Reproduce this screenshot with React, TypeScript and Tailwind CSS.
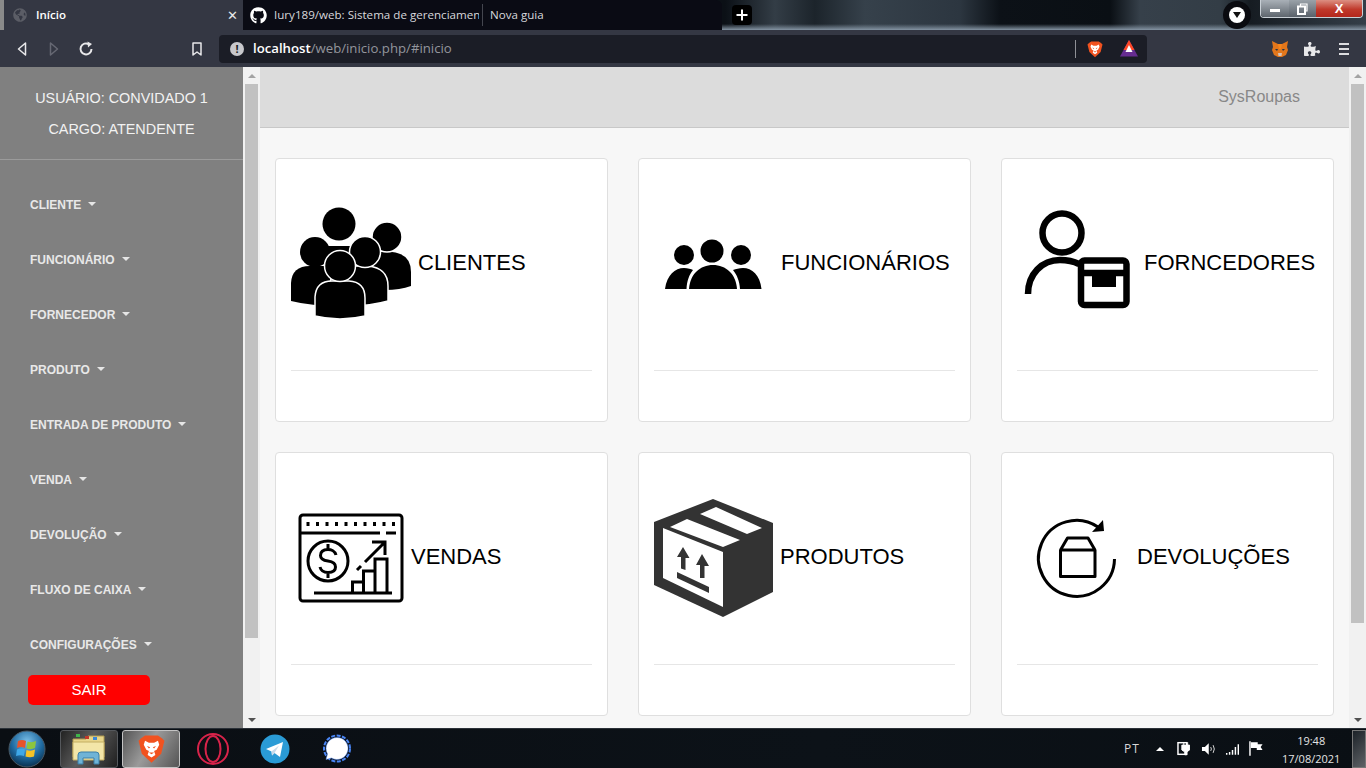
import React from "react";
import { FaGithub, FaGlobeAmericas, FaPuzzlePiece } from "react-icons/fa";

const arial = "font-['Liberation_Sans',Arial,sans-serif]";
const ui = "font-['Open_Sans',sans-serif]";

function Caret() {
  return <span className="ml-[7px] mt-[-1px] h-0 w-0 border-x-[4px] border-t-[4px] border-x-transparent border-t-[#e6e6e6]" />;
}

const menu = ["CLIENTE", "FUNCIONÁRIO", "FORNECEDOR", "PRODUTO", "ENTRADA DE PRODUTO", "VENDA", "DEVOLUÇÃO", "FLUXO DE CAIXA", "CONFIGURAÇÕES"];

function Scrollbar({ end }: { end: number }) {
  return (
    <div className="flex h-full w-[17px] shrink-0 flex-col items-center bg-[#f1f1f1]">
      <div className="flex h-[17px] w-full shrink-0 items-center justify-center">
        <span className="h-0 w-0 border-x-[4px] border-b-[4px] border-x-transparent border-b-[#a3a3a3]" />
      </div>
      <div className="w-[13px] bg-[#c1c1c1]" style={{ height: end }} />
      <div className="flex-1" />
      <div className="flex h-[17px] w-full shrink-0 items-center justify-center">
        <span className="h-0 w-0 border-x-[4px] border-t-[4px] border-x-transparent border-t-[#505050]" />
      </div>
    </div>
  );
}

function Card({ icon, label }: { icon: React.ReactNode; label: string }) {
  return (
    <div className="h-[264px] rounded-[4px] border border-[#dfdfdf] bg-white px-[15px] pt-[15px]">
      <div className={`flex h-[176px] items-center text-[22px] text-black ${arial}`}>
        {icon}
        <span className="whitespace-nowrap">{label}</span>
      </div>
      <div className="mt-[20px] h-px bg-[#e6e6e6]" />
    </div>
  );
}

const IconClients = (
  <svg width="127" height="176" viewBox="291 174 127 176" className="shrink-0">
    <g fill="#000" stroke="#fff" strokeWidth="1.5">
      <circle cx="339" cy="224" r="16.5" stroke="none" />
      <path d="M325 246 H353 V275 H325Z" stroke="none" />
      <path d="M379 252 H392 Q411 254 411 272 V286 Q400 290 385 290 L370 262 Z" stroke="none" />
      <circle cx="387" cy="237" r="15" stroke="#fff" />
      <path d="M291 301 V283 Q292 266 310 266 H326 Q345 268 348 283 V306 Q315 307 291 301Z" stroke="none" />
      <path d="M330 304 V283 Q333 266 350 266 H368 Q388 268 388 286 V301 Q370 306 350 306Z" />
      <circle cx="315" cy="252" r="15" stroke="none" />
      <circle cx="365" cy="252" r="15.5" />
      <path d="M315 316 V297 Q316 281 332 281 H349 Q365 282 365 298 V316 Q340 322 315 316Z" />
      <circle cx="340" cy="266" r="15.5" />
    </g>
  </svg>
);

const IconStaff = (
  <svg width="127" height="176" viewBox="654 174 127 176" className="shrink-0">
    <circle cx="712" cy="251" r="11.5" fill="#000" />
    <circle cx="684" cy="255" r="10" fill="#000" />
    <circle cx="741" cy="255" r="10" fill="#000" />
    <path d="M689 289 C690 274 700 265 713 265 C726 265 736 274 737 289Z" fill="#000" />
    <path d="M665 289 C667 275 675 268 684 268 C688 268 691 269 693 270 C689 275 687 281 686.500 289Z" fill="#000" />
    <path d="M761.500 289 C760 275 752 268 743 268 C739 268 736 269 733 270 C737 275 739.500 281 740 289Z" fill="#000" />
  </svg>
);

const IconSupplier = (
  <svg width="127" height="176" viewBox="1017 174 127 176" className="shrink-0">
    <g fill="none" stroke="#000" strokeWidth="6.500">
      <circle cx="1062" cy="233" r="19.500" />
      <path d="M1028 294 C1028 274 1042 260 1060 260 C1067 260 1073 261 1079 264" />
      <rect x="1081" y="260.500" width="45.500" height="44.500" rx="3.500" />
      <path d="M1080 273 H1127" />
    </g>
    <rect x="1092" y="273" width="24" height="14" fill="#000" />
  </svg>
);

const IconSales = (
  <svg width="120" height="176" viewBox="291 468 120 176" className="shrink-0">
    <g fill="none" stroke="#000" strokeWidth="3">
      <rect x="300" y="515" width="102" height="86" rx="3" />
      <path d="M300 533 H380 M386 533 H396" />
      <path d="M308 522 V526 M317.500 522 V526 M327 522 V526 M336.500 522 V526 M346 522 V526 M355.500 522 V526 M365 522 V526 M374.500 522 V526 M384 522 V526 M393.500 522 V526" />
      <circle cx="328" cy="561" r="20" />
      <path d="M336 555 C335 551 331 549.500 328 549.500 C323 549.500 320.500 552 320.500 555.500 C320.500 559.500 324 560.500 328 561 C332 561.500 335.500 563 335.500 567 C335.500 570.500 333 572.500 328 572.500 C324 572.500 321 571 320 567 M328 544 V549 M328 573 V578" />
      <path d="M357 570 L361 566 M365 562 L385 542 M372 542 H385 V555" />
      <path d="M314 593 H392 M352.500 593 V582 H363.500 V593 M363.500 582 V571 H375 V593 M375 571 V559 H387 V593" />
    </g>
  </svg>
);

const IconBox = (
  <svg width="126" height="176" viewBox="654 468 126 176" className="shrink-0">
    <path d="M713 499 L773 523 V592 L723 617 L654 585 V522Z" fill="#333" />
    <path d="M663 528 L723 552 V607 L663 578Z" fill="#fff" />
    <path d="M670 527 L687 519 L740 540 L723 547Z M700 514 L716 507 L762 528 L747 534Z" fill="#fff" />
    <path d="M683 547 L689.500 558 H685.500 V570 L681 568.500 V557 H677Z M702 554 L709 566 H704.500 V578 H700 V565 H696Z" fill="#333" />
    <path d="M677 572 L709 587 V593 L677 578Z" fill="#333" />
  </svg>
);

const IconReturn = (
  <svg width="120" height="176" viewBox="1017 468 120 176" className="shrink-0">
    <g fill="none" stroke="#000" strokeWidth="3">
      <path d="M1098 527 A38 38 0 1 0 1114.500 559" />
      <path d="M1060.500 550 H1095 V576.500 H1060.500Z M1060.500 550 L1067.500 538 H1088 L1095 550" strokeLinejoin="round" />
    </g>
    <path d="M1103 520 L1104 531 L1092 532Z" fill="#000" />
  </svg>
);

function BraveLogo({ size, className = "" }: { size: number; className?: string }) {
  return (
    <svg width={size} height={size} viewBox="0 0 24 24" className={className}>
      <path d="M4 4 L7 2 H17 L20 4 L22 6 L19.500 16 L12 23 L4.500 16 L2 6Z" fill="#f1521f" />
      <path d="M7 6 L10 7.500 H14 L17 6 L18 9 L16 13 L14 14 L15 17 L12 19 L9 17 L10 14 L8 13 L6 9Z" fill="#fff" />
      <path d="M8.500 10 L11 11 L10 12Z M15.500 10 L13 11 L14 12Z M10 15 H14 L12 16.500Z" fill="#f1521f" />
    </svg>
  );
}

function Fox() {
  return (
    <svg width="18" height="18" viewBox="0 0 18 18">
      <path d="M1 1 L7 4 H11 L17 1 L16 7 L17 10 L15 15 L11 17 H7 L3 15 L1 10 L2 7Z" fill="#e2761b" />
      <path d="M4 9 L7 9 L6 11Z M14 9 L11 9 L12 11Z" fill="#233447" />
      <path d="M7 13 L11 13 L10.500 16 H7.500Z" fill="#d7c1b3" />
      <path d="M7 4 H11 L10 9 H8Z" fill="#f6851b" />
    </svg>
  );
}

function TaskButton({ children, active }: { children: React.ReactNode; active?: boolean }) {
  return (
    <div className={`flex h-[38px] w-[58px] items-center justify-center rounded-[3px] border ${active ? "border-[#c4c4c4] bg-[linear-gradient(120deg,#555_0%,#9a9a9a_45%,#555_100%)]" : "border-[#55585c] bg-[linear-gradient(120deg,#222_0%,#5c5c5c_45%,#1f1f1f_100%)]"}`}>
      {children}
    </div>
  );
}

export default function App() {
  return (
    <div className={`flex h-[768px] w-[1366px] flex-col overflow-hidden bg-[#0b1016] ${arial}`}>
      {/* tab strip */}
      <div className="flex h-[30px] shrink-0 bg-[linear-gradient(to_bottom,transparent_24px,#8494a3_30px),linear-gradient(90deg,#0b1016_725px,#333d46_775px,#1c242b_815px,#36414b_865px,#2c3640_960px,#0c1117_1000px,#0a0f14_1110px,#36404a_1140px,#333d46_1220px,#161c22_1250px,#343e48_1366px)]">
        <div className="h-full w-[4px] bg-[#8a8a8a]" />
        <div className={`flex h-full w-[239px] items-center bg-[#343743] pl-[9px] text-[11.500px] font-semibold text-white ${ui}`}>
          <FaGlobeAmericas className="text-[14px] text-[#5b5d66]" />
          <span className="ml-[9px]">Início</span>
          <span className="ml-auto mr-[5px] text-[13px] font-normal leading-none text-[#e8e8e8]">✕</span>
        </div>
        <div className={`flex h-full w-[479px] items-center rounded-tr-[6px] bg-[#0a0b14] text-[11.600px] text-[#d8d8dc] ${ui}`}>
          <FaGithub className="ml-[7px] shrink-0 text-[17px] text-white" />
          <span className="ml-[7px] w-[205px] overflow-hidden whitespace-nowrap">Iury189/web: Sistema de gerenciamen</span>
          <span className="ml-[3px] h-[22px] w-px bg-[#44464f]" />
          <span className="ml-[7px]">Nova guia</span>
        </div>
        <div className="ml-[10px] mt-[5px] flex h-[20px] w-[20px] items-center justify-center rounded-[4px] bg-black">
          <svg width="12" height="12" viewBox="0 0 12 12"><path d="M6 0.500 V11.500 M0.500 6 H11.500" stroke="#fff" strokeWidth="2" /></svg>
        </div>
        <div className="ml-[471px] mt-px flex h-[28px] w-[28px] items-center justify-center rounded-full bg-[#0a0b10]">
          <div className="flex h-[16px] w-[16px] items-center justify-center rounded-full bg-white">
            <span className="h-0 w-0 border-x-[4px] border-t-[6px] border-x-transparent border-t-[#111]" />
          </div>
        </div>
        <div className="ml-[9px] flex h-[18px] w-[103px] overflow-hidden rounded-b-[4px] border border-t-0 border-[#c9d0d6]">
          <div className="flex w-[28px] items-center justify-center bg-[linear-gradient(to_bottom,#a9b0b7,#5e666e)]">
            <span className="mt-[3px] h-[3px] w-[10px] bg-white" />
          </div>
          <div className="flex w-[27px] items-center justify-center bg-[linear-gradient(to_bottom,#9aa2a9,#59616a)]">
            <svg width="11" height="12" viewBox="0 0 11 12"><path d="M3.500 3 V1 H10 V8 H8" fill="none" stroke="#fff" strokeWidth="1.200" /><rect x="1" y="3.500" width="7" height="7.500" fill="none" stroke="#fff" strokeWidth="2" /></svg>
          </div>
          <div className={`flex flex-1 items-center justify-center bg-[linear-gradient(to_bottom,#dc8f82,#c0392b_55%,#b3271c)] text-[13px] font-bold leading-none text-white ${arial}`}>X</div>
        </div>
      </div>

      {/* toolbar */}
      <div className="flex h-[37px] shrink-0 items-center bg-[#343743]">
        <svg width="10" height="14" viewBox="0 0 10 14" className="ml-[17px]"><path d="M8.500 1 L1.500 7 L8.500 13Z" fill="none" stroke="#e8e8ea" strokeWidth="1.500" strokeLinejoin="round" /></svg>
        <svg width="10" height="14" viewBox="0 0 10 14" className="ml-[22px]"><path d="M1.500 1 L8.500 7 L1.500 13Z" fill="none" stroke="#666873" strokeWidth="1.500" strokeLinejoin="round" /></svg>
        <svg width="16" height="16" viewBox="0 0 16 16" className="ml-[19px]"><path d="M13.500 8 A5.500 5.500 0 1 1 11 3.300" fill="none" stroke="#e8e8ea" strokeWidth="2" /><path d="M9.500 0.500 L14 3 L10 6.500Z" fill="#e8e8ea" /></svg>
        <svg width="10" height="14" viewBox="0 0 10 14" className="ml-[98px]"><path d="M1 1 H9 V13 L5 10 L1 13Z" fill="none" stroke="#e8e8ea" strokeWidth="1.500" strokeLinejoin="round" /></svg>
        <div className={`ml-[17px] flex h-[28px] w-[928px] items-center rounded-[4px] bg-[#1b1d26] text-[13.200px] ${ui}`}>
          <span className="ml-[11px] flex h-[14px] w-[14px] items-center justify-center rounded-full bg-[#c8c8cc] text-[11px] font-bold leading-none text-[#1b1d26]">!</span>
          <span className="ml-[9px] font-semibold text-white">localhost</span>
          <span className="text-[#93959c]">/web/inicio.php/#inicio</span>
          <span className="ml-auto h-[18px] w-px bg-[#8f9096]" />
          <BraveLogo size={18} className="ml-[10px]" />
          <svg width="18" height="17" viewBox="0 0 18 17" className="ml-[16px] mr-[9px]">
            <path d="M9 0 L18 16.500 H0Z" fill="#662d91" />
            <path d="M9 0 L14.500 10 H3.500Z" fill="#ff4724" />
            <path d="M9 5 L12.500 12 H5.500Z" fill="#fff" />
          </svg>
        </div>
        <div className="ml-[124px]"><Fox /></div>
        <FaPuzzlePiece className="ml-[15px] text-[16px] text-[#e8e8ea]" />
        <div className="ml-[19px] flex w-[10px] flex-col gap-[3px]">
          <span className="h-[2px] bg-[#dcdcdf]" />
          <span className="h-[2px] bg-[#dcdcdf]" />
          <span className="h-[2px] bg-[#dcdcdf]" />
        </div>
      </div>

      {/* page */}
      <div className="flex h-[661px] shrink-0">
        <aside className="flex w-[243px] shrink-0 flex-col bg-[#808080] text-white">
          <div className="flex h-[92px] flex-col items-center pt-[21px] text-[14.400px] leading-[20px] text-[#f2f2f2]">
            <p>USUÁRIO: CONVIDADO 1</p>
            <p className="mt-[11px]">CARGO: ATENDENTE</p>
          </div>
          <div className="h-px bg-[#9b9b9b]" />
          <nav className="mt-[17px] flex flex-col">
            {menu.map((m) => (
              <div key={m} className="flex h-[55px] items-center pl-[30px] text-[12px] font-bold text-[#e8e8e8]">
                {m}
                <Caret />
              </div>
            ))}
          </nav>
          <button className="ml-[28px] mt-[3px] flex h-[30px] w-[122px] items-center justify-center rounded-[5px] bg-[#ff0000] text-[15px] text-white">SAIR</button>
        </aside>
        <Scrollbar end={554} />
        <main className="flex min-w-0 flex-1 flex-col bg-[#f7f7f7]">
          <header className="flex h-[61px] shrink-0 items-center justify-end border-b border-[#c8c8c8] bg-[#dcdcdc] pr-[49px] text-[16px] text-[#888]">SysRoupas</header>
          <div className="grid grid-cols-3 gap-[30px] px-[15px] pt-[30px]">
            <Card icon={IconClients} label="CLIENTES" />
            <Card icon={IconStaff} label="FUNCIONÁRIOS" />
            <Card icon={IconSupplier} label="FORNCEDORES" />
            <Card icon={IconSales} label="VENDAS" />
            <Card icon={IconBox} label="PRODUTOS" />
            <Card icon={IconReturn} label="DEVOLUÇÕES" />
          </div>
        </main>
        <Scrollbar end={539} />
      </div>

      {/* taskbar */}
      <div className="flex h-[40px] shrink-0 items-center border-t border-[#2b3138] bg-[linear-gradient(90deg,#0a0e13,#0c1218_60%,#0a0f14)]">
        <svg width="38" height="38" viewBox="0 0 38 38" className="ml-[8px] shrink-0">
          <defs>
            <radialGradient id="orb" cx="50%" cy="30%" r="70%">
              <stop offset="0" stopColor="#7cc0e8" />
              <stop offset="0.6" stopColor="#1f6aa0" />
              <stop offset="1" stopColor="#0b3150" />
            </radialGradient>
          </defs>
          <circle cx="19" cy="19" r="18" fill="url(#orb)" stroke="#4a5a66" />
          <path d="M10 11 Q14 9 18 11 L17 18 Q13 16 9 18Z" fill="#e8532b" />
          <path d="M19.500 11.500 Q24 13 28 11 L27 18 Q23 20 18.500 18.500Z" fill="#8cc63f" />
          <path d="M9 19.500 Q13 17.500 17 19.500 L16 26 Q12 24.500 8 26Z" fill="#3ea8e8" />
          <path d="M18.500 20 Q23 21.500 27 19.500 L26 26.500 Q22 28 17.500 26.500Z" fill="#f7c325" />
        </svg>
        <div className="ml-[14px]">
          <TaskButton>
            <svg width="34" height="32" viewBox="0 0 34 32">
              <path d="M1 6 H14 L16 3 H32 V24 H1Z" fill="#e8d58a" stroke="#b09a50" />
              <rect x="4" y="1" width="4" height="3" fill="#3fb54a" />
              <rect x="13" y="3" width="4" height="3" fill="#c0392b" />
              <rect x="21" y="4" width="4" height="3" fill="#3b88d8" />
              <path d="M1 9 H32 V27 H1Z" fill="#f3e6a8" stroke="#c4ae62" />
              <path d="M6 31 V22 Q6 19 9 19 H24 Q27 19 27 22 V31 H22 V25 H11 V31Z" fill="#6fb3d6" stroke="#3a7fa8" />
            </svg>
          </TaskButton>
        </div>
        <div className="ml-[4px]">
          <TaskButton active><BraveLogo size={31} /></TaskButton>
        </div>
        <svg width="34" height="34" viewBox="0 0 34 34" className="ml-[16px] shrink-0">
          <circle cx="17" cy="17" r="15" fill="none" stroke="#d8234a" strokeWidth="2" />
          <ellipse cx="17" cy="17" rx="7.500" ry="13" fill="none" stroke="#d8234a" strokeWidth="2" />
        </svg>
        <svg width="30" height="30" viewBox="0 0 30 30" className="ml-[30px] shrink-0">
          <circle cx="15" cy="15" r="14.500" fill="#2a9bd6" />
          <path d="M6 15 L23 8 L20 23 L14.500 19 L12 21.500 L11.500 17.500Z" fill="#fff" />
          <path d="M11.500 17.500 L19 11.500 L14.500 19 L12 21.500Z" fill="#c8daea" />
        </svg>
        <svg width="30" height="30" viewBox="0 0 30 30" className="ml-[32px] shrink-0">
          <circle cx="15" cy="14.500" r="13" fill="none" stroke="#4a86f5" strokeWidth="2" strokeDasharray="4 1.500" />
          <path d="M15 3.500 A11 11 0 1 1 9.500 24 L4 25.500 L5.500 20 A11 11 0 0 1 15 3.500Z" fill="#fff" stroke="#4a86f5" strokeWidth="0.500" />
        </svg>
        <span className={`ml-[772px] text-[12px] tracking-[1px] text-[#d8d8d8] ${ui}`}>PT</span>
        <span className="ml-[16px] h-0 w-0 border-x-[4px] border-b-[4px] border-x-transparent border-b-white" />
        <svg width="14" height="15" viewBox="0 0 14 15" className="ml-[13px]">
          <rect x="1" y="1.500" width="9" height="12" fill="none" stroke="#fff" strokeWidth="1.500" />
          <path d="M5 4 H13 V9 L10 11 V14 H8 V11 L5 9Z M7 1 V4 M11 1 V4" fill="#fff" stroke="#fff" />
        </svg>
        <svg width="16" height="14" viewBox="0 0 16 14" className="ml-[11px]">
          <path d="M1 5 H4 L8 1 V13 L4 9 H1Z" fill="#fff" />
          <path d="M10 5 Q11.500 7 10 9 M12.500 3 Q15 7 12.500 11" fill="none" stroke="#d8d8d8" />
        </svg>
        <svg width="15" height="12" viewBox="0 0 15 12" className="ml-[8px]">
          <path d="M1 10 H2.500 V12 H1Z M4 9 H5.500 V12 H4Z M7 7 H8.500 V12 H7Z M10 4 H11.500 V12 H10Z M13 1 H14.500 V12 H13Z" fill="#fff" />
        </svg>
        <svg width="14" height="15" viewBox="0 0 14 15" className="ml-[10px]">
          <path d="M1 0 V15" stroke="#fff" strokeWidth="1.500" />
          <path d="M2 1 H9 V3 H14 L12 6 L14 9 H8 V7 H2Z" fill="#fff" />
        </svg>
        <div className={`ml-[19px] flex w-[60px] flex-col items-center pt-[1px] text-[11px] leading-[17px] text-[#e4e4e4] ${ui}`}>
          <span>19:48</span>
          <span className="mt-[1px]">17/08/2021</span>
        </div>
        <div className="ml-[12px] h-[38px] w-[14px] border border-[#777] bg-[linear-gradient(135deg,#1c2228,#5f6266)]" />
      </div>
    </div>
  );
}
